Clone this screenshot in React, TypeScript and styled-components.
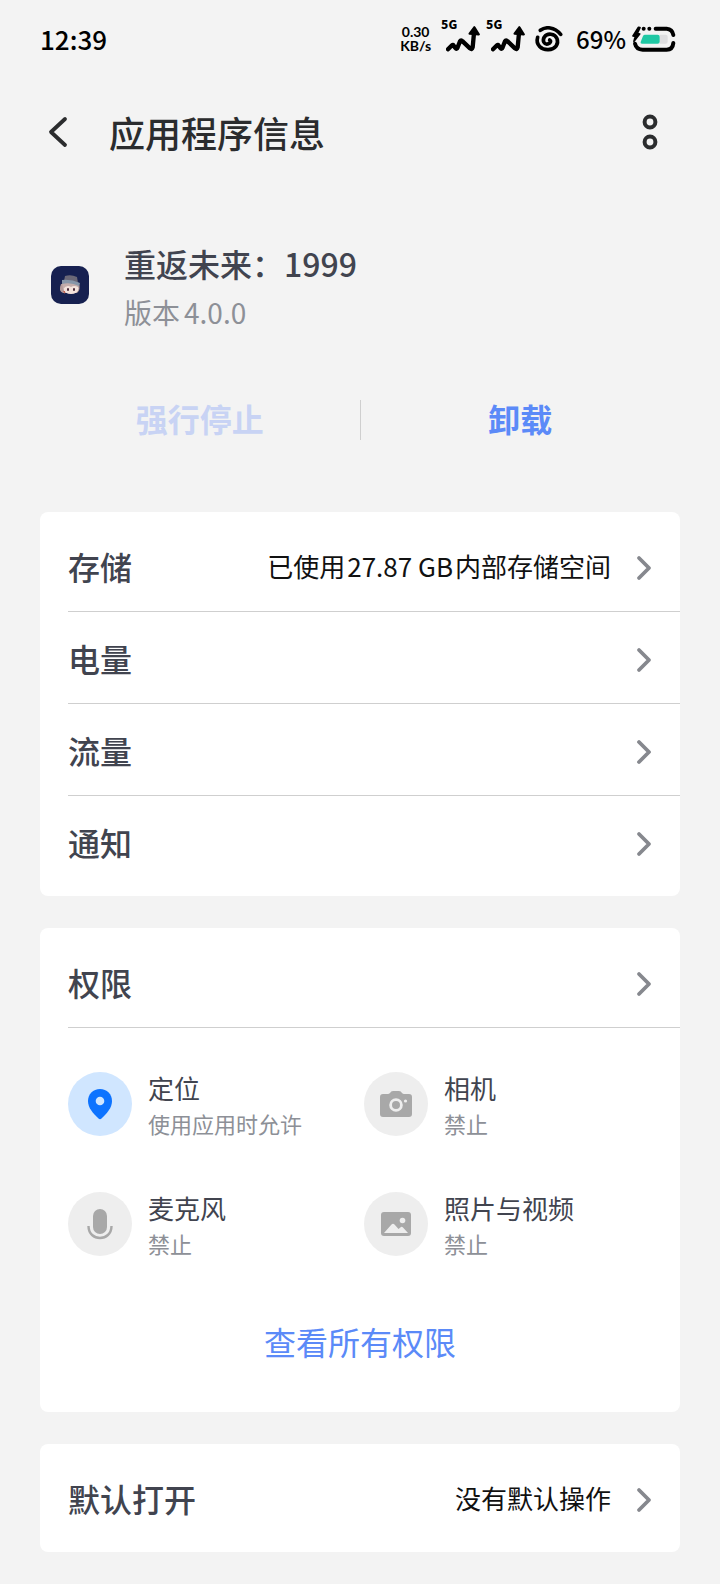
import React from "react";
import styled, { createGlobalStyle } from "styled-components";

const GlobalStyle = createGlobalStyle`
  * { box-sizing: border-box; }
  body {
    margin: 0;
    background: #f3f3f3;
    color: #41444f;
    font-family: "Noto Sans CJK SC", "Noto Sans", sans-serif;
  }
  button {
    margin: 0;
    padding: 0;
    border: 0;
    background: none;
    color: inherit;
    font: inherit;
    cursor: pointer;
  }
  svg { display: block; flex: none; }
  h1, h2, p, ul { margin: 0; padding: 0; }
  ul { list-style: none; }
`;

const Page = styled.div`
  min-height: 100vh;
  padding-bottom: 32px;
`;

const StatusBar = styled.div`
  display: flex;
  align-items: center;
  justify-content: space-between;
  height: 80px;
  padding: 0 44px 2px 40px;
  color: #000;
`;

const Clock = styled.time`
  font-size: 26px;
  font-weight: 500;
  line-height: 40px;
`;

const StatusIcons = styled.div`
  display: flex;
  align-items: center;
`;

const NetSpeed = styled.div`
  margin-right: 10px;
  font-family: Lato, "Noto Sans", sans-serif;
  font-size: 14px;
  font-weight: 700;
  line-height: 14px;
  text-align: center;
`;

const Signal = styled.div`
  position: relative;
  display: flex;
  justify-content: flex-end;
  width: 39px;
  margin-right: 6px;
`;

const SignalType = styled.span`
  position: absolute;
  top: -9px;
  left: 0;
  font-size: 12px;
  font-weight: 900;
  line-height: 14px;
`;

const Battery = styled.div`
  display: flex;
  align-items: center;
  gap: 6px;
  margin-left: 13px;
  font-size: 24px;
  font-weight: 500;
  line-height: 40px;
`;

const Header = styled.header`
  display: flex;
  align-items: center;
  height: 104px;
  padding: 0 40px;
  color: #2b2c2e;
`;

const IconButton = styled.button`
  display: flex;
  align-items: center;
  justify-content: center;
  width: 36px;
  height: 60px;
`;

const Title = styled.h1`
  flex: 1;
  padding-left: 33px;
  font-size: 36px;
  font-weight: 500;
  line-height: 52px;
`;

const MenuButton = styled(IconButton)`
  width: 60px;
`;

const AppInfo = styled.section`
  display: flex;
  align-items: center;
  gap: 35px;
  padding: 52px 51px 0;
`;

const AppName = styled.h2`
  font-size: 32px;
  font-weight: 500;
  line-height: 54px;
`;

const AppVersion = styled.p`
  color: #8d9097;
  font-size: 28px;
  line-height: 44px;
`;

const VersionNumber = styled.span`
  margin-left: 4px;
`;

const Actions = styled.div`
  display: flex;
  margin: 66px 40px 72px;
`;

const ActionButton = styled.button`
  flex: 1;
  height: 40px;
  padding-bottom: 4px;
  color: #5b8af8;
  font-size: 32px;
  font-weight: 700;
  line-height: 36px;

  &:disabled {
    color: #c8d3f4;
    cursor: default;
  }

  &:not(:last-child) {
    border-right: 1px solid #cfcfcf;
  }
`;

const Cards = styled.main`
  display: flex;
  flex-direction: column;
  gap: 32px;
  padding: 0 40px;
`;

const Card = styled.section`
  padding: 8px 0 8px 28px;
  border-radius: 8px;
  background: #fff;
`;

const Row = styled.button<{ $divided?: boolean }>`
  display: flex;
  align-items: center;
  width: 100%;
  height: 92px;
  padding-right: 27px;
  border-bottom: ${(p) => (p.$divided ? "1px solid #cfcfcf" : "0")};
  text-align: left;
`;

const RowLabel = styled.span`
  flex: 1;
  font-size: 32px;
  font-weight: 500;
  line-height: 48px;
`;

const RowValue = styled.span`
  margin-right: 24px;
  color: #111;
  font-size: 26px;
  line-height: 40px;
`;

const Amount = styled.span`
  margin: 0 2px;
`;

const PermissionGrid = styled.ul`
  display: grid;
  grid-template-columns: 1fr 1fr;
  row-gap: 48px;
  padding: 40px 20px 0 0;
`;

const Permission = styled.li`
  display: flex;
  align-items: center;
  gap: 16px;
  height: 72px;
`;

const PermissionText = styled.div`
  padding-top: 2px;
`;

const Badge = styled.span<{ $active?: boolean }>`
  display: flex;
  flex: none;
  align-items: center;
  justify-content: center;
  width: 64px;
  height: 64px;
  border-radius: 50%;
  background: ${(p) => (p.$active ? "#d0e6ff" : "#eeeeee")};
`;

const PermissionName = styled.p`
  font-size: 26px;
  line-height: 36px;
`;

const PermissionState = styled.p`
  color: #8d9097;
  font-size: 22px;
  line-height: 34px;
`;

const AllPermissions = styled.button`
  display: block;
  width: 100%;
  height: 60px;
  margin: 51px 0 33px;
  padding-right: 28px;
  color: #5b8af8;
  font-size: 32px;
  line-height: 60px;
`;

const SignalIcon = () => (
  <svg width="34" height="26" viewBox="171 51 102 78" fill="none" aria-hidden="true">
    <path
      d="M177 121 L189 109 Q192 106 194 110 L199 117 Q203 122 206 115 L213 97 Q216 91 221 97 L243 118 Q249 123 251 115 L255 72"
      stroke="#000"
      strokeWidth="13"
      strokeLinecap="round"
      strokeLinejoin="round"
    />
    <path d="M256 55 L269 76 L242 74 Z" fill="#000" stroke="#000" strokeWidth="7" strokeLinejoin="round" />
  </svg>
);

const SpiralIcon = () => (
  <svg width="32" height="26" viewBox="422 50 96 78" fill="none" aria-hidden="true">
    <g stroke="#000" strokeWidth="11" strokeLinecap="round">
      <path d="M450 63 C466 51 492 52 511 75" />
      <path d="M442 84 C435 107 454 122 474 121 C495 120 506 104 500 88 C494 72 471 70 462 83 C455 95 462 106 472 104 C480 102 483 95 478 92" />
    </g>
  </svg>
);

const BatteryIcon = () => (
  <svg width="44" height="26" viewBox="725 50 132 78" fill="none" aria-hidden="true">
    <g stroke="#000" strokeWidth="12" strokeLinecap="round">
      <path d="M796 58 H829 Q846 59 849 77" />
      <path d="M849 101 Q847 121 829 121 H757 Q738 121 734 103" />
    </g>
    <circle cx="760" cy="58" r="6" fill="#000" />
    <circle cx="777" cy="58" r="6" fill="#000" />
    <path
      d="M744 54 L728 80 L735 81 L731 96 L748 74 L741 72 L749 55 Z"
      fill="#000"
      stroke="#000"
      strokeWidth="5"
      strokeLinejoin="round"
    />
    <path d="M808 76 H826 Q832 76 832 82 V97 Q832 103 826 103 H808 Z" fill="#dedee0" />
    <path d="M764 76 H802 Q808 76 808 82 V97 Q808 103 802 103 H755 Q749 103 751 98 L758 80 Q760 76 764 76 Z" fill="#1fc8a4" />
  </svg>
);

const BackIcon = () => (
  <svg width="20" height="34" viewBox="0 0 20 34" fill="none" aria-hidden="true">
    <path d="M17 4 L3 17 L17 30" stroke="#2b2c2e" strokeWidth="3.8" strokeLinecap="round" strokeLinejoin="round" />
  </svg>
);

const MoreIcon = () => (
  <svg width="16" height="36" viewBox="0 0 16 36" fill="none" aria-hidden="true">
    <circle cx="8" cy="8" r="5.4" stroke="#2b2c2e" strokeWidth="4" />
    <circle cx="8" cy="28" r="5.4" stroke="#2b2c2e" strokeWidth="4" />
  </svg>
);

const AppIcon = () => (
  <svg width="38" height="38" viewBox="0 0 38 38" aria-hidden="true">
    <rect width="38" height="38" rx="10" fill="#162050" />
    <path d="M10 18 Q7 25 12 27 L26 27 Q30 24 28 17 Z" fill="#b39a9a" />
    <ellipse cx="20" cy="22.500" rx="7.500" ry="5.500" fill="#f4e2dc" />
    <path d="M11 17 Q19 14 28 17 L27 21 Q23 19 20 21 Q16 18 12 23 Z" fill="#c4adab" />
    <rect x="16" y="22" width="2" height="3" rx="1" fill="#4b2c3b" />
    <rect x="22" y="22" width="2" height="3" rx="1" fill="#4b2c3b" />
    <path d="M12 25 L14 25 L14 28 Z" fill="#c4604f" />
    <path d="M13 15 L14 10 Q20 8 26 11 L27 17 Z" fill="#6b6877" />
    <path d="M11 14 Q20 13 29 17 L28 20 Q20 16 11 18 Z" fill="#8796a9" />
  </svg>
);

const Chevron = () => (
  <svg width="18" height="30" viewBox="0 0 18 30" fill="none" aria-hidden="true">
    <path d="M4 7 L14 17 L4 27" stroke="#86888e" strokeWidth="3.8" strokeLinecap="round" strokeLinejoin="round" />
  </svg>
);

const PinIcon = () => (
  <svg width="26" height="32" viewBox="0 0 26 32" aria-hidden="true">
    <path
      d="M13 1 C6 1 1 6 1 13 C1 20 6 25 11.500 30.500 Q13 32 14.500 30.500 C20 25 25 20 25 13 C25 6 20 1 13 1 Z"
      fill="#0d73ff"
    />
    <circle cx="13" cy="13" r="4.300" fill="#d0e6ff" />
  </svg>
);

const CameraIcon = () => (
  <svg width="32" height="26" viewBox="0 0 32 26" aria-hidden="true">
    <path
      d="M3 3 H8 Q9 3 10 2 Q11 0 13 0 H19 Q21 0 22 2 Q23 3 24 3 H29 Q32 3 32 6 V23 Q32 26 29 26 H3 Q0 26 0 23 V6 Q0 3 3 3 Z"
      fill="#a8a8a8"
    />
    <circle cx="16" cy="14" r="5.400" fill="none" stroke="#eee" strokeWidth="2.800" />
    <circle cx="25.500" cy="10" r="1.600" fill="#eee" />
  </svg>
);

const MicIcon = () => (
  <svg width="26" height="32" viewBox="0 0 26 32" aria-hidden="true">
    <rect x="6" y="1" width="14" height="25" rx="7" fill="#a8a8a8" />
    <path d="M1.500 18 C1.500 34 24.500 34 24.500 18" fill="none" stroke="#a8a8a8" strokeWidth="2.400" />
  </svg>
);

const PhotoIcon = () => (
  <svg width="30" height="24" viewBox="0 0 30 24" aria-hidden="true">
    <rect width="30" height="24" rx="3" fill="#a8a8a8" />
    <circle cx="21.500" cy="8.500" r="2.800" fill="#eee" />
    <path d="M3 21 L10.500 12.500 Q12 11 13.500 12.500 L17.500 17 L20 15 Q21 14.500 22 15.500 L27 21 Z" fill="#eee" />
  </svg>
);

const permissions = [
  { name: "定位", state: "使用应用时允许", icon: <PinIcon />, active: true },
  { name: "相机", state: "禁止", icon: <CameraIcon /> },
  { name: "麦克风", state: "禁止", icon: <MicIcon /> },
  { name: "照片与视频", state: "禁止", icon: <PhotoIcon /> },
];

type SettingRowProps = { label: string; value?: React.ReactNode; divided?: boolean };

const SettingRow = ({ label, value, divided }: SettingRowProps) => (
  <Row type="button" $divided={divided}>
    <RowLabel>{label}</RowLabel>
    {value && <RowValue>{value}</RowValue>}
    <Chevron />
  </Row>
);

export default function App() {
  return (
    <Page lang="zh-CN">
      <GlobalStyle />
      <StatusBar>
        <Clock>12:39</Clock>
        <StatusIcons>
          <NetSpeed>
            <div>0.30</div>
            <div>KB/s</div>
          </NetSpeed>
          <Signal>
            <SignalType>5G</SignalType>
            <SignalIcon />
          </Signal>
          <Signal>
            <SignalType>5G</SignalType>
            <SignalIcon />
          </Signal>
          <SpiralIcon />
          <Battery>
            <span>69%</span>
            <BatteryIcon />
          </Battery>
        </StatusIcons>
      </StatusBar>

      <Header>
        <IconButton type="button" aria-label="返回">
          <BackIcon />
        </IconButton>
        <Title>应用程序信息</Title>
        <MenuButton type="button" aria-label="更多">
          <MoreIcon />
        </MenuButton>
      </Header>

      <AppInfo>
        <AppIcon />
        <div>
          <AppName>重返未来：1999</AppName>
          <AppVersion>
            版本<VersionNumber>4.0.0</VersionNumber>
          </AppVersion>
        </div>
      </AppInfo>

      <Actions>
        <ActionButton type="button" disabled>
          强行停止
        </ActionButton>
        <ActionButton type="button">卸载</ActionButton>
      </Actions>

      <Cards>
        <Card>
          <SettingRow
            label="存储"
            divided
            value={
              <>
                已使用<Amount>27.87 GB</Amount>内部存储空间
              </>
            }
          />
          <SettingRow label="电量" divided />
          <SettingRow label="流量" divided />
          <SettingRow label="通知" />
        </Card>

        <Card>
          <SettingRow label="权限" divided />
          <PermissionGrid>
            {permissions.map((p) => (
              <Permission key={p.name}>
                <Badge $active={p.active}>{p.icon}</Badge>
                <PermissionText>
                  <PermissionName>{p.name}</PermissionName>
                  <PermissionState>{p.state}</PermissionState>
                </PermissionText>
              </Permission>
            ))}
          </PermissionGrid>
          <AllPermissions type="button">查看所有权限</AllPermissions>
        </Card>

        <Card>
          <SettingRow label="默认打开" value="没有默认操作" />
        </Card>
      </Cards>
    </Page>
  );
}
